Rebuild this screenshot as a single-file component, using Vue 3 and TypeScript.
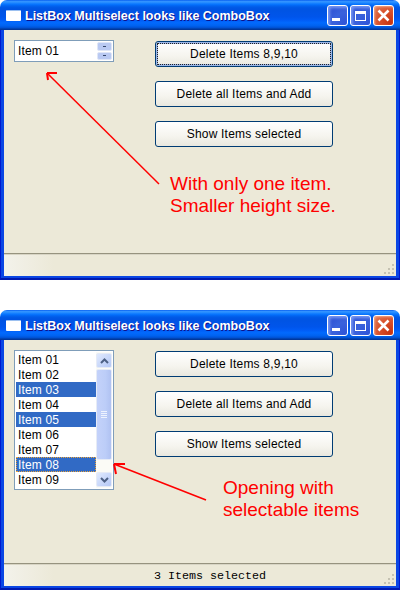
<script setup lang="ts">
interface Item {
  label: string
  selected?: boolean
  focused?: boolean
}

const items: Item[] = [
  { label: 'Item 01' },
  { label: 'Item 02' },
  { label: 'Item 03', selected: true },
  { label: 'Item 04' },
  { label: 'Item 05', selected: true },
  { label: 'Item 06' },
  { label: 'Item 07' },
  { label: 'Item 08', selected: true, focused: true },
  { label: 'Item 09' },
]

const buttons = ['Delete Items 8,9,10', 'Delete all Items and Add', 'Show Items selected']
const gripDots = [
  [8, 0],
  [4, 4],
  [8, 4],
  [0, 8],
  [4, 8],
  [8, 8],
]
</script>

<template>
  <div class="page">
    <!-- collapsed -->
    <section class="window">
      <header class="titlebar">
        <span class="app-icon"></span>
        <span class="title">ListBox Multiselect looks like ComboBox</span>
        <span class="caption-btn min"><i></i></span>
        <span class="caption-btn max"><i></i></span>
        <span class="caption-btn close">
          <svg width="13" height="13" viewBox="0 0 13 13"><path d="M1.5 1.5l10 10M11.5 1.5l-10 10" stroke="#fff" stroke-width="2.6" /></svg>
        </span>
      </header>
      <div class="frame">
        <div class="inner">
          <div class="body">
            <div class="list small">
              <div class="rows">
                <div class="row">Item 01</div>
              </div>
              <div class="spin">
                <span class="spin-btn"></span>
                <span class="spin-btn"></span>
              </div>
            </div>
            <div class="actions">
              <button v-for="(b, i) in buttons" :key="b" class="xp-btn" :class="{ focus: i === 0 }">
                <span>{{ b }}</span>
              </button>
            </div>
            <svg class="arrow" width="400" height="250" viewBox="0 30 400 250">
              <path d="M159 184L47 73" fill="none" stroke="#f00" stroke-width="1.5" />
              <path d="M47 73h10M47 73l1 7" fill="none" stroke="#f00" stroke-width="2" />
            </svg>
            <p class="note note-top">With only one item.<br />Smaller height size.</p>
          </div>
          <footer class="status">
            <span class="status-text"></span>
            <svg class="grip" width="11" height="11" viewBox="0 0 11 11">
              <rect v-for="d in gripDots" :key="d.join()" :x="d[0]" :y="d[1]" width="2" height="2" fill="#c5c2b2" />
            </svg>
          </footer>
        </div>
      </div>
    </section>

    <!-- opened -->
    <section class="window">
      <header class="titlebar">
        <span class="app-icon"></span>
        <span class="title">ListBox Multiselect looks like ComboBox</span>
        <span class="caption-btn min"><i></i></span>
        <span class="caption-btn max"><i></i></span>
        <span class="caption-btn close">
          <svg width="13" height="13" viewBox="0 0 13 13"><path d="M1.5 1.5l10 10M11.5 1.5l-10 10" stroke="#fff" stroke-width="2.6" /></svg>
        </span>
      </header>
      <div class="frame">
        <div class="inner">
          <div class="body">
            <div class="list open">
              <div class="rows">
                <div
                  v-for="item in items"
                  :key="item.label"
                  class="row"
                  :class="{ selected: item.selected, focused: item.focused }"
                >
                  {{ item.label }}
                </div>
              </div>
              <div class="scrollbar">
                <span class="sb-btn">
                  <svg width="9" height="6" viewBox="0 0 9 6"><path d="M1 5l3.5-3.5L8 5" fill="none" stroke="#4d6185" stroke-width="2" /></svg>
                </span>
                <span class="thumb">
                  <i></i><i></i><i></i><i></i>
                </span>
                <span class="track"></span>
                <span class="sb-btn">
                  <svg width="9" height="6" viewBox="0 0 9 6"><path d="M1 1l3.5 3.5L8 1" fill="none" stroke="#4d6185" stroke-width="2" /></svg>
                </span>
              </div>
            </div>
            <div class="actions">
              <button v-for="b in buttons" :key="b" class="xp-btn">
                <span>{{ b }}</span>
              </button>
            </div>
            <svg class="arrow" width="400" height="250" viewBox="0 340 400 250">
              <path d="M206 500L114 464" fill="none" stroke="#f00" stroke-width="1.6" />
              <path d="M114 464h11M114 464l2 10" fill="none" stroke="#f00" stroke-width="2" />
            </svg>
            <p class="note note-bottom">Opening with<br />selectable items</p>
          </div>
          <footer class="status">
            <span class="status-text">3 Items selected</span>
            <svg class="grip" width="11" height="11" viewBox="0 0 11 11">
              <rect v-for="d in gripDots" :key="d.join()" :x="d[0]" :y="d[1]" width="2" height="2" fill="#c5c2b2" />
            </svg>
          </footer>
        </div>
      </div>
    </section>
  </div>
</template>

<style>
html,
body {
  margin: 0;
  background: #fff;
}
</style>

<style scoped>
.page {
  display: flex;
  flex-direction: column;
  gap: 30px;
  width: 400px;
  height: 590px;
  overflow: hidden;
  font-family: 'Liberation Sans', Arial, sans-serif;
}

.window {
  display: flex;
  flex-direction: column;
  height: 280px;
  border-radius: 7px 7px 0 0;
  overflow: hidden;
}

.titlebar {
  display: flex;
  align-items: center;
  flex: none;
  height: 30px;
  box-sizing: border-box;
  padding: 1px 6px 0 6px;
  background: linear-gradient(
    180deg,
    #0058ee 0%,
    #3593ff 4%,
    #288eff 8%,
    #127dff 12%,
    #036ffc 16%,
    #0262ee 20%,
    #0057e5 26%,
    #0054e3 32%,
    #0055eb 56%,
    #005bf5 66%,
    #026afe 76%,
    #0062ef 86%,
    #0052d6 92%,
    #0040ab 96%,
    #003092 100%
  );
}

.app-icon {
  flex: none;
  width: 15px;
  height: 10px;
  background: #fff;
  border-top: 1px solid #9cc0f0;
  border-radius: 1px;
}

.title {
  flex: 1;
  margin-left: 4px;
  color: #fff;
  font-size: 12.5px;
  font-weight: 700;
  white-space: nowrap;
  text-shadow: 1px 1px 0 #0f1089;
}

.caption-btn {
  display: flex;
  flex: none;
  align-items: center;
  justify-content: center;
  position: relative;
  box-sizing: border-box;
  width: 21px;
  height: 21px;
  margin-left: 2px;
  border: 1px solid #fff;
  border-radius: 3px;
  background: radial-gradient(circle at 90% 90%, #2f55d8 0%, #3a62dc 45%, #2a4cd0 100%);
  box-shadow: inset 2px 2px 3px rgba(150, 180, 255, 0.7);
}

.caption-btn.close {
  background: radial-gradient(circle at 85% 85%, #c83410 0%, #d9512b 50%, #e0805c 100%);
  box-shadow: inset 1px 1px 2px rgba(255, 200, 170, 0.6);
}

.min i {
  position: absolute;
  left: 4px;
  bottom: 4px;
  width: 8px;
  height: 3px;
  background: #fff;
}

.max i {
  box-sizing: border-box;
  width: 11px;
  height: 10px;
  border: 1px solid #fff;
  border-top-width: 3px;
}

.frame {
  display: flex;
  flex: 1;
  min-height: 0;
  border: 1px solid #0019cf;
  border-top: none;
  border-bottom: 2px solid #0019b0;
}

.inner {
  display: flex;
  flex: 1;
  flex-direction: column;
  min-width: 0;
  border: 3px solid #0a46e4;
  border-top: none;
  border-bottom-width: 2px;
  background: #ece9d8;
}

.body {
  display: flex;
  flex: 1;
  align-items: flex-start;
  position: relative;
  padding: 10px 0 0 10px;
}

.list {
  display: flex;
  flex: none;
  box-sizing: border-box;
  width: 100px;
  border: 1px solid #7f9db9;
  background: #fff;
}

.list.small {
  height: 22px;
  padding: 1px;
}

.list.open {
  height: 140px;
  padding: 1px;
}

.rows {
  flex: 1;
  min-width: 0;
}

.small .row {
  height: 18px;
  line-height: 18px;
}

.row {
  box-sizing: border-box;
  height: 15px;
  padding-left: 2px;
  color: #000;
  font-size: 12px;
  line-height: 16px;
  letter-spacing: 0.15px;
  white-space: nowrap;
}

.row.selected {
  color: #fff;
  background: #316ac5;
}

.row.focused {
  outline: 1px dotted #e8a33c;
  outline-offset: -1px;
}

.spin {
  display: flex;
  flex: none;
  flex-direction: column;
  gap: 1px;
  width: 15px;
}

.spin-btn {
  display: flex;
  align-items: center;
  justify-content: center;
  box-sizing: border-box;
  height: 8.5px;
  border: 1px solid #dfe6f7;
  border-radius: 2px;
  background: #b9c9f2;
}

.spin-btn::before {
  content: '';
  width: 3px;
  height: 1px;
  background: #34466b;
}

.scrollbar {
  display: flex;
  flex: none;
  flex-direction: column;
  box-sizing: border-box;
  width: 16px;
  padding: 1px 0;
  background: #fbfbf6;
}

.sb-btn {
  display: flex;
  flex: none;
  align-items: center;
  justify-content: center;
  box-sizing: border-box;
  height: 15px;
  border: 1px solid #e6ebf6;
  border-radius: 2px;
  background: linear-gradient(135deg, #e1eafe, #b4c8f6);
}

.thumb {
  display: flex;
  flex: none;
  flex-direction: column;
  align-items: center;
  justify-content: center;
  gap: 1px;
  box-sizing: border-box;
  height: 91px;
  margin-top: 1px;
  border: 1px solid #e6ebf6;
  border-radius: 2px;
  background: linear-gradient(90deg, #c4d2fa, #bccdf8 60%, #b0c2f2);
}

.thumb i {
  width: 6px;
  height: 1px;
  background: #eef3fe;
}

.track {
  flex: 1;
}

.actions {
  display: flex;
  flex-direction: column;
  gap: 14px;
  margin: 1px 0 0 41px;
}

.xp-btn {
  box-sizing: border-box;
  width: 178px;
  height: 26px;
  padding: 0;
  border: 1px solid #003c74;
  border-radius: 3px;
  background: linear-gradient(180deg, #fff 0%, #f5f4ee 60%, #e9e8df 100%);
  color: #000;
  font-family: inherit;
  font-size: 12px;
  letter-spacing: 0.2px;
}

.xp-btn.focus {
  box-shadow: inset 0 0 0 2px #9db7e8;
  outline: 1px dotted #222;
  outline-offset: -3px;
}

.arrow {
  position: absolute;
  top: 0;
  left: -4px;
  pointer-events: none;
}

.note {
  position: absolute;
  margin: 0;
  color: #f00;
  font-size: 19px;
  line-height: 22px;
  white-space: nowrap;
}

.note-top {
  top: 143px;
  left: 166px;
}

.note-bottom {
  top: 137px;
  left: 219px;
}

.status {
  display: flex;
  align-items: center;
  justify-content: center;
  flex: none;
  position: relative;
  height: 23px;
  box-sizing: border-box;
  padding: 2px 0 0 20px;
  border-top: 1px solid #96937f;
  box-shadow: inset 0 1px 0 #d8d5c5;
  background: linear-gradient(90deg, #f3f2eb 0, #ece9d8 50px);
}

.status-text {
  color: #000;
  font-family: 'Liberation Mono', monospace;
  font-size: 11.7px;
}

.grip {
  position: absolute;
  right: 1px;
  bottom: 1px;
}
</style>
